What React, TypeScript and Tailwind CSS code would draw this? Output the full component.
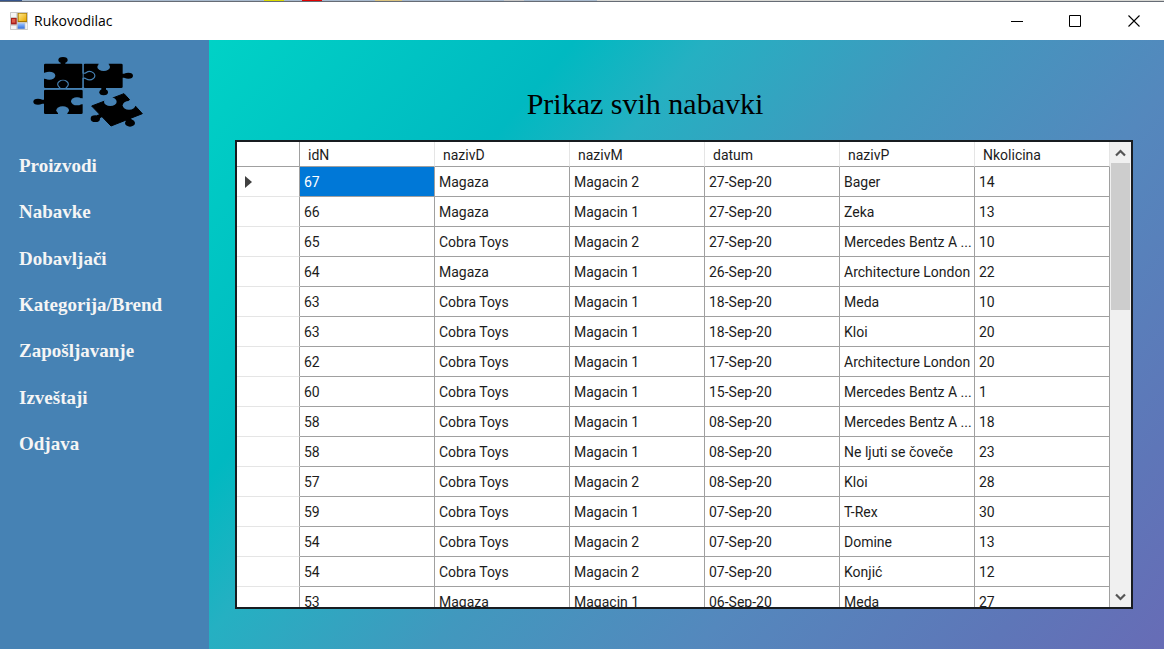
const menu = ["Proizvodi", "Nabavke", "Dobavljači", "Kategorija/Brend", "Zapošljavanje", "Izveštaji", "Odjava"];

const columns = ["idN", "nazivD", "nazivM", "datum", "nazivP", "Nkolicina"];

const rows = [
  ["67", "Magaza", "Magacin 2", "27-Sep-20", "Bager", "14"],
  ["66", "Magaza", "Magacin 1", "27-Sep-20", "Zeka", "13"],
  ["65", "Cobra Toys", "Magacin 2", "27-Sep-20", "Mercedes Bentz A ...", "10"],
  ["64", "Magaza", "Magacin 1", "26-Sep-20", "Architecture London", "22"],
  ["63", "Cobra Toys", "Magacin 1", "18-Sep-20", "Meda", "10"],
  ["63", "Cobra Toys", "Magacin 1", "18-Sep-20", "Kloi", "20"],
  ["62", "Cobra Toys", "Magacin 1", "17-Sep-20", "Architecture London", "20"],
  ["60", "Cobra Toys", "Magacin 1", "15-Sep-20", "Mercedes Bentz A ...", "1"],
  ["58", "Cobra Toys", "Magacin 1", "08-Sep-20", "Mercedes Bentz A ...", "18"],
  ["58", "Cobra Toys", "Magacin 1", "08-Sep-20", "Ne ljuti se čoveče", "23"],
  ["57", "Cobra Toys", "Magacin 2", "08-Sep-20", "Kloi", "28"],
  ["59", "Cobra Toys", "Magacin 1", "07-Sep-20", "T-Rex", "30"],
  ["54", "Cobra Toys", "Magacin 2", "07-Sep-20", "Domine", "13"],
  ["54", "Cobra Toys", "Magacin 2", "07-Sep-20", "Konjić", "12"],
  ["53", "Magaza", "Magacin 1", "06-Sep-20", "Meda", "27"],
];

function FormIcon() {
  return (
    <svg viewBox="0 0 54 54" className="size-[18px]" aria-hidden="true">
      <defs>
        <linearGradient id="gold" x1="0" y1="0" x2="1" y2="1">
          <stop offset="0" stopColor="#ffe88a" />
          <stop offset="1" stopColor="#e9a800" />
        </linearGradient>
        <linearGradient id="sky" x1="0" y1="0" x2="0" y2="1">
          <stop offset="0" stopColor="#9cc4ff" />
          <stop offset="1" stopColor="#2f6fe0" />
        </linearGradient>
      </defs>
      <rect width="54" height="54" rx="2" fill="#c9c9c9" />
      <path d="M3 3h16v12H3zM3 41h16v10H3zM46 34h6v17h-6z" fill="#f5f5f5" />
      <rect x="3" y="18" width="17" height="19" fill="#a8201c" />
      <rect x="6" y="21" width="10" height="11" fill="#dc5a48" />
      <rect x="23" y="3" width="28" height="27" fill="#a67800" />
      <rect x="26" y="5" width="23" height="22" fill="url(#gold)" />
      <rect x="23" y="34" width="21" height="16" fill="url(#sky)" />
    </svg>
  );
}

function PuzzleLogo() {
  return (
    <svg viewBox="99 168 330 216" className="h-[72px] w-[110px]" role="img" aria-label="Puzzle">
      <g fill="#000">
        <rect x="132" y="191" width="116" height="73" rx="4" />
        <rect x="251" y="191" width="117" height="73" rx="4" />
        <rect x="132" y="269" width="116" height="73" rx="4" />
        <path d="M275 318l97-37 55 60-94 37z" stroke="#000" strokeWidth="3" strokeLinejoin="round" />
        <ellipse cx="189" cy="180" rx="14" ry="9" />
        <ellipse cx="385" cy="227" rx="14" ry="9" />
        <ellipse cx="311" cy="277" rx="13" ry="9" />
        <ellipse cx="114" cy="305" rx="14" ry="9" />
        <ellipse cx="286" cy="356" rx="14" ry="10" />
        <ellipse cx="390" cy="369" rx="15" ry="11" />
        <path d="M182 183h14v12h-14zM364 221h14v12h-14zM304 260h14v14h-14zM120 299h16v12h-16zM290 346l12-5 8 8-14 8zM376 360l14-8 8 12-12 6z" />
      </g>
      <g fill="#4682b4">
        <ellipse cx="148" cy="227" rx="18" ry="12" />
        <ellipse cx="311" cy="201" rx="19" ry="12" />
        <ellipse cx="231" cy="304" rx="18" ry="12" />
        <ellipse cx="188" cy="331" rx="19" ry="12" />
        <ellipse cx="331" cy="305" rx="19" ry="13" />
        <ellipse cx="387" cy="316" rx="19" ry="13" />
        <path d="M310 300l-5-6 28-11 5 12zM382 306l10-9 20 17-10 6z" />
        <path d="M130 218h8v18h-8zM296 188h30v7h-30zM242 295h8v18h-8zM174 336h28v8h-28z" />
      </g>
      <g fill="none" stroke="#4682b4" strokeWidth="3.5">
        <path d="M249 190v29q5 2 9-1a16 12 0 1 1 0 18q-4-3-9-1v30" />
        <path d="M131 266.500h47q4-2 0-5a16 12 0 1 1 22 0q-4 3 0 5h48" />
      </g>
    </svg>
  );
}

function TitleBar() {
  return (
    <header className="flex h-[38px] shrink-0 items-center bg-white pl-[10px] font-['Open_Sans','Noto_Sans',sans-serif]">
      <FormIcon />
      <span className="ml-[6px] text-[14px] leading-5 text-black">Rukovodilac</span>
      <div className="ml-auto flex">
        <button aria-label="Minimize" className="flex h-[38px] w-[58px] items-center justify-center">
          <svg viewBox="0 0 13 13" className="size-[13px]"><path d="M0 6.5h12" stroke="#000" /></svg>
        </button>
        <button aria-label="Maximize" className="flex h-[38px] w-[58px] items-center justify-center">
          <svg viewBox="0 0 13 13" className="size-[13px]"><path d="M.5.5h11v11H.5z" fill="none" stroke="#000" /></svg>
        </button>
        <button aria-label="Close" className="flex h-[38px] w-[60px] items-center justify-center">
          <svg viewBox="0 0 13 13" className="size-[13px]"><path d="M.5.5l11 11M11.5.5l-11 11" stroke="#000" strokeWidth="1.1" /></svg>
        </button>
      </div>
    </header>
  );
}

function ScrollBar() {
  return (
    <div className="flex w-[21px] shrink-0 flex-col bg-[#f0f0f0] px-px">
      <button aria-label="Scroll up" className="flex h-[21px] items-center justify-center">
        <svg viewBox="0 0 11 8" className="h-2 w-[11px]"><path d="M1 6.500l4.500-4.500 4.500 4.500" fill="none" stroke="#555" strokeWidth="2.200" /></svg>
      </button>
      <div className="h-[147px] bg-[#cdcdcd]" />
      <button aria-label="Scroll down" className="mt-auto flex h-[21px] items-center justify-center">
        <svg viewBox="0 0 11 8" className="h-2 w-[11px]"><path d="M1 1.500l4.500 4.500 4.500-4.500" fill="none" stroke="#555" strokeWidth="2.200" /></svg>
      </button>
    </div>
  );
}

function PurchaseGrid() {
  return (
    <div className="flex min-h-0 flex-1 overflow-hidden border-2 border-[#181c20] bg-white font-[Roboto,'Liberation_Sans',sans-serif] text-[14px] leading-5 text-[#1c1c1c]">
      <div className="min-w-0 flex-1 overflow-hidden">
        <table className="w-full table-fixed border-separate border-spacing-0">
          <thead>
            <tr className="h-[25px]">
              <th aria-label="Row" className="w-[63px] border-r border-b border-[#a0a0a0] p-0" />
              {columns.map((name) => (
                <th key={name} scope="col" className="border-r border-b border-r-[#e5e5e5] border-b-[#a0a0a0] p-0 pt-[2px] pl-2 text-left font-normal">
                  {name}
                </th>
              ))}
            </tr>
          </thead>
          <tbody>
            {rows.map((row, index) => (
              <tr key={index} className="h-[30px]">
                <th scope="row" aria-label={`Row ${index + 1}`} className="border-r border-b border-r-[#a0a0a0] border-b-[#e5e5e5] p-0 pl-2 text-left">
                  {index === 0 && (
                    <svg viewBox="0 0 7 12" className="h-3 w-[7px]"><path d="M0 0l7 6-7 6z" fill="#404040" /></svg>
                  )}
                </th>
                {row.map((value, column) => (
                  <td
                    key={column}
                    className={
                      index === 0 && column === 0
                        ? "border-r border-b border-[#a0a0a0] bg-[#0078d7] p-0 pl-1 whitespace-nowrap text-white"
                        : "border-r border-b border-[#a0a0a0] p-0 pl-1 whitespace-nowrap"
                    }
                  >
                    {value}
                  </td>
                ))}
              </tr>
            ))}
          </tbody>
        </table>
      </div>
      <ScrollBar />
    </div>
  );
}

export default function App() {
  return (
    <div className="flex h-screen flex-col overflow-hidden">
      <div className="flex h-[2px] shrink-0 border-b border-[#666c75] bg-[#d8d8d4]">
        <div className="w-[22px] bg-[#34548c]" />
        <div className="w-[242px] bg-[#a8bace]" />
        <div className="w-[20px] bg-[#dcdc00]" />
        <div className="w-[18px] bg-[#a8bace]" />
        <div className="w-[20px] bg-[#e00000]" />
        <div className="w-[53px] bg-[#a8bace]" />
        <div className="w-[27px] bg-[#dcc480]" />
        <div className="w-[102px] bg-[#a8bace]" />
        <div className="w-[20px] bg-[#c8c8c8]" />
        <div className="w-[73px] bg-[#a8bace]" />
      </div>
      <TitleBar />
      <div className="flex min-h-0 flex-1">
        <aside className="w-[209px] shrink-0 bg-[#4682b4] pt-4">
          <div className="pl-[33px]">
            <PuzzleLogo />
          </div>
          <nav className="mt-[15px] flex h-[324px] flex-col pl-[19px] font-['Liberation_Serif',serif] text-[19px] leading-6 font-bold text-[#f5f5f5]">
            {menu.map((item) => (
              <a key={item} href="#" className="flex flex-1 items-center">
                {item}
              </a>
            ))}
          </nav>
        </aside>
        <main className="flex min-w-0 flex-1 flex-col bg-[linear-gradient(130deg,#00d2c6_0%,#00b9c1_25%,#25b0c2_34%,#4198be_50%,#5488bd_68%,#5e76b8_88%,#676cb6_100%)] pr-[31px] pb-[40px] pl-[26px]">
          <h1 className="-ml-[78px] pt-[46px] pb-[18px] text-center font-['Liberation_Serif',serif] text-[30px] leading-9 text-black">
            Prikaz svih nabavki
          </h1>
          <PurchaseGrid />
        </main>
      </div>
    </div>
  );
}
